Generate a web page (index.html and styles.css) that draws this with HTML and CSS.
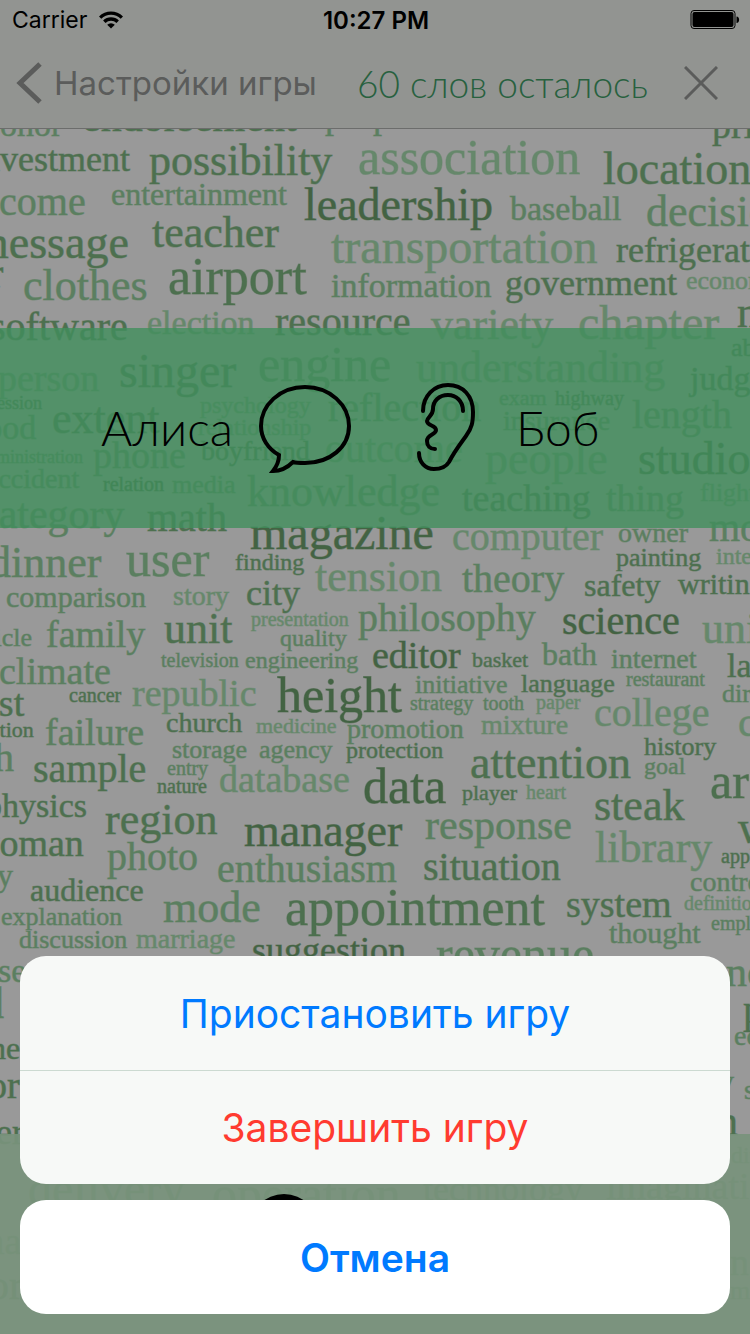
FILE: index.html
```html
<!DOCTYPE html>
<html lang="ru">
<head>
<meta charset="utf-8">
<meta name="viewport" content="width=device-width, initial-scale=1">
<title>60 слов осталось</title>
<link rel="stylesheet" href="styles.css">
</head>
<body>
<div class="screen">
<svg class="cloud" viewBox="0 -1 750 1334" preserveAspectRatio="xMidYMin slice" aria-hidden="true">
<text class="c s34" x="0" y="135">onor</text>
<text class="b s42" x="82" y="130">endorsement</text>
<text class="c s36" x="325" y="127">proposal</text>
<text class="b s38" x="712" y="137">private</text>
<text class="b s36" x="-28" y="170">investment</text>
<text class="b s44" x="149" y="174">possibility</text>
<text class="d s50" x="358" y="173">association</text>
<text class="b s46" x="603" y="183">location</text>
<text class="c s40" x="-32" y="214">income</text>
<text class="c s32" x="111" y="204">entertainment</text>
<text class="a s46" x="304" y="219">leadership</text>
<text class="c s34" x="510" y="219">baseball</text>
<text class="c s44" x="646" y="225">decision</text>
<text class="b s46" x="-27" y="257">message</text>
<text class="b s44" x="152" y="246">teacher</text>
<text class="d s48" x="331" y="262">transportation</text>
<text class="b s36" x="616" y="261">refrigerator</text>
<text class="b s40" x="-10" y="286">r</text>
<text class="c s44" x="23" y="299">clothes</text>
<text class="b s52" x="168" y="293">airport</text>
<text class="c s34" x="331" y="296">information</text>
<text class="b s36" x="505" y="294">government</text>
<text class="d s26" x="686" y="288">economy</text>
<text class="b s40" x="-10" y="339">software</text>
<text class="d s34" x="147" y="333">election</text>
<text class="b s40" x="275" y="334">resource</text>
<text class="d s44" x="431" y="338">variety</text>
<text class="d s48" x="578" y="338">chapter</text>
<text class="b s44" x="737" y="326">n</text>
<text class="d s38" x="-2" y="390">person</text>
<text class="b s48" x="119" y="386">singer</text>
<text class="c s50" x="258" y="380">engine</text>
<text class="d s44" x="416" y="381">understanding</text>
<text class="b s26" x="731" y="355">able</text>
<text class="b s34" x="690" y="389">judge</text>
<text class="b s18" x="-10" y="408">session</text>
<text class="b s44" x="52" y="432">extent</text>
<text class="d s24" x="200" y="412">psychology</text>
<text class="c s40" x="328" y="420">reflection</text>
<text class="c s22" x="499" y="404">exam</text>
<text class="b s20" x="555" y="404">highway</text>
<text class="c s40" x="632" y="427">length</text>
<text class="c s34" x="-26" y="438">food</text>
<text class="c s28" x="503" y="429">insurance</text>
<text class="d s24" x="198" y="434">relationship</text>
<text class="c s18" x="-21" y="462">administration</text>
<text class="c s38" x="93" y="467">phone</text>
<text class="b s28" x="201" y="459">boyfriend</text>
<text class="d s40" x="325" y="461">outcome</text>
<text class="d s46" x="485" y="473">people</text>
<text class="a s46" x="638" y="473">studio</text>
<text class="c s28" x="-14" y="487">accident</text>
<text class="a s20" x="103" y="490">relation</text>
<text class="c s26" x="172" y="492">media</text>
<text class="c s44" x="247" y="505">knowledge</text>
<text class="b s38" x="462" y="510">teaching</text>
<text class="c s38" x="606" y="510">thing</text>
<text class="d s26" x="700" y="500">flight</text>
<text class="c s42" x="-20" y="527">category</text>
<text class="b s40" x="147" y="530">math</text>
<text class="a s48" x="250" y="548">magazine</text>
<text class="d s40" x="452" y="549">computer</text>
<text class="c s28" x="618" y="541">owner</text>
<text class="c s40" x="709" y="540">more</text>
<text class="c s44" x="-11" y="576">dinner</text>
<text class="c s50" x="126" y="575">user</text>
<text class="b s24" x="235" y="569">finding</text>
<text class="b s26" x="616" y="565">painting</text>
<text class="d s24" x="716" y="563">interest</text>
<text class="d s44" x="315" y="590">tension</text>
<text class="c s40" x="462" y="591">theory</text>
<text class="b s32" x="584" y="595">safety</text>
<text class="b s30" x="678" y="593">writing</text>
<text class="c s30" x="6" y="606">comparison</text>
<text class="d s28" x="173" y="604">story</text>
<text class="b s36" x="246" y="604">city</text>
<text class="d s20" x="251" y="625">presentation</text>
<text class="c s40" x="358" y="630">philosophy</text>
<text class="a s40" x="562" y="633">science</text>
<text class="d s44" x="702" y="642">union</text>
<text class="c s26" x="-33" y="645">article</text>
<text class="c s38" x="46" y="646">family</text>
<text class="b s44" x="164" y="642">unit</text>
<text class="c s24" x="280" y="645">quality</text>
<text class="c s20" x="161" y="666">television</text>
<text class="c s24" x="245" y="667">engineering</text>
<text class="a s38" x="372" y="667">editor</text>
<text class="b s22" x="472" y="666">basket</text>
<text class="c s32" x="542" y="664">bath</text>
<text class="c s28" x="611" y="667">internet</text>
<text class="b s34" x="727" y="676">law</text>
<text class="c s38" x="-1" y="683">climate</text>
<text class="b s20" x="69" y="701">cancer</text>
<text class="d s38" x="132" y="705">republic</text>
<text class="a s50" x="277" y="711">height</text>
<text class="c s26" x="415" y="692">initiative</text>
<text class="b s26" x="521" y="691">language</text>
<text class="c s20" x="626" y="685">restaurant</text>
<text class="c s26" x="722" y="701">director</text>
<text class="b s38" x="-37" y="715">cost</text>
<text class="b s22" x="-20" y="736">action</text>
<text class="c s38" x="45" y="744">failure</text>
<text class="b s28" x="166" y="731">church</text>
<text class="d s22" x="256" y="732">medicine</text>
<text class="c s20" x="410" y="709">strategy</text>
<text class="c s20" x="483" y="709">tooth</text>
<text class="d s20" x="536" y="708">paper</text>
<text class="c s28" x="347" y="737">promotion</text>
<text class="d s28" x="481" y="733">mixture</text>
<text class="d s40" x="594" y="725">college</text>
<text class="d s42" x="738" y="735">c</text>
<text class="c s40" x="-6" y="770">h</text>
<text class="c s26" x="172" y="757">storage</text>
<text class="c s26" x="259" y="757">agency</text>
<text class="b s24" x="346" y="757">protection</text>
<text class="b s26" x="644" y="754">history</text>
<text class="b s46" x="470" y="777">attention</text>
<text class="c s24" x="644" y="773">goal</text>
<text class="b s40" x="33" y="781">sample</text>
<text class="c s20" x="167" y="774">entry</text>
<text class="b s20" x="157" y="792">nature</text>
<text class="d s38" x="219" y="791">database</text>
<text class="a s50" x="363" y="802">data</text>
<text class="b s22" x="462" y="799">player</text>
<text class="d s20" x="526" y="798">heart</text>
<text class="b s44" x="594" y="819">steak</text>
<text class="b s50" x="710" y="797">ar</text>
<text class="b s34" x="-15" y="816">physics</text>
<text class="b s44" x="105" y="833">region</text>
<text class="a s46" x="244" y="845">manager</text>
<text class="c s42" x="425" y="838">response</text>
<text class="d s44" x="595" y="861">library</text>
<text class="b s46" x="738" y="842">w</text>
<text class="b s38" x="-28" y="855">woman</text>
<text class="c s40" x="107" y="869">photo</text>
<text class="c s40" x="217" y="881">enthusiasm</text>
<text class="b s40" x="423" y="879">situation</text>
<text class="b s20" x="721" y="862">apple</text>
<text class="c s28" x="690" y="890">control</text>
<text class="c s32" x="-3" y="885">y</text>
<text class="b s32" x="30" y="900">audience</text>
<text class="c s26" x="1" y="924">explanation</text>
<text class="c s44" x="163" y="921">mode</text>
<text class="b s52" x="285" y="924">appointment</text>
<text class="b s38" x="566" y="916">system</text>
<text class="d s20" x="684" y="909">definition</text>
<text class="c s20" x="711" y="929">employ</text>
<text class="c s30" x="609" y="942">thought</text>
<text class="c s26" x="19" y="947">discussion</text>
<text class="d s28" x="136" y="947">marriage</text>
<text class="a s36" x="252" y="961">suggestion</text>
<text class="c s50" x="436" y="970">revenue</text>
<text class="c s34" x="-2" y="981">se</text>
<text class="c s44" x="-18" y="1017">d</text>
<text class="b s32" x="-10" y="1058">ne</text>
<text class="b s38" x="-12" y="1097">or</text>
<text class="b s36" x="-4" y="1143">er</text>
<text class="c s42" x="726" y="985">no</text>
<text class="b s42" x="743" y="1022">p</text>
<text class="c s28" x="734" y="1044">ec</text>
<text class="c s32" x="718" y="1091">y</text>
<text class="c s28" x="744" y="1098">s</text>
<text class="b s42" x="717" y="1134">n</text>
<text class="c s24" x="731" y="1162">dit</text>
<text class="c s48" x="28" y="1204">delivery</text>
<text class="c s50" x="212" y="1210">operation</text>
<text class="c s36" x="423" y="1200">technology</text>
<text class="c s38" x="606" y="1198">imagination</text>
<text class="c s38" x="-25" y="1253">ma</text>
<text class="b s42" x="-12" y="1298">or</text>
<text class="c s38" x="730" y="1274">n</text>
<text class="c s26" x="730" y="1298">mi</text>
</svg>

<header class="top">
  <div class="status">
    <div class="carrier">
      <span>Carrier</span>
      <svg class="wifi" viewBox="0 0 26 20" aria-hidden="true">
        <path d="M1 6.5A17 17 0 0 1 25 6.5L22.7 8.8A13.7 13.7 0 0 0 3.3 8.8Z"/>
        <path d="M5.1 10.6A11.2 11.2 0 0 1 20.9 10.6L18.5 13A7.8 7.8 0 0 0 7.5 13Z"/>
        <path d="M9.2 14.7A5.4 5.4 0 0 1 16.8 14.7L13 18.6Z"/>
      </svg>
    </div>
    <span class="time">10:27 PM</span>
    <svg class="battery" viewBox="0 0 50 20" aria-hidden="true">
      <rect x="1" y="0.5" width="44" height="18" rx="3" fill="none" stroke="#000"/>
      <rect x="2.5" y="2" width="41" height="15" rx="2"/>
      <path d="M46.500 6.5C50 6.5 50 13 46.500 13Z"/>
    </svg>
  </div>
  <nav class="nav">
    <a class="back" href="#">
      <svg class="chevron" viewBox="0 0 26 42" aria-hidden="true"><path d="M24 2L4 21L24 40"/></svg>
      <span>Настройки игры</span>
    </a>
    <h1 class="title">60 слов осталось</h1>
    <button class="close" type="button" aria-label="Закрыть">
      <svg class="cross" viewBox="0 0 34 34" aria-hidden="true"><path d="M1 1L33 33M33 1L1 33"/></svg>
    </button>
  </nav>
</header>

<main class="players">
  <div class="player speaker">
    <span>Алиса</span>
    <svg class="bubble" viewBox="0 0 92 88" aria-hidden="true"><path d="M20 70C9 64 2 53 2 41C2 20 21 2 46 2S90 20 90 41S71 78 46 78C41 78 37 78 34 77C28 83 22 86 14 86C18 81 20 76 20 70Z"/></svg>
  </div>
  <div class="player listener">
    <svg class="ear" viewBox="0 0 62 90" aria-hidden="true"><path d="M8 29C8 14 19 3 33 3C48 3 58 14 58 30C58 40 57 46 51 54C43 65 39 70 34 80C31 85 26 87 19 87C10 87 4 80 4 71M48 29C48 19 41 13 33 13C24 13 18 19 18 27C18 34 12 35 12 39C12 44 21 43 21 48C21 53 12 52 12 59C12 64 15 67 20 67"/></svg>
    <span>Боб</span>
  </div>
</main>

<footer class="start">
  <svg class="dial" viewBox="0 0 70 70" aria-hidden="true"><circle cx="35" cy="35" r="35"/></svg>
</footer>

<div class="sheet" role="dialog" aria-label="Меню игры">
  <div class="actions">
    <button class="action" type="button">Приостановить игру</button>
    <button class="action danger" type="button">Завершить игру</button>
  </div>
  <button class="action cancel" type="button">Отмена</button>
</div>
</div>
</body>
</html>
```
FILE: styles.css
```css
* { box-sizing: border-box; }

body {
  margin: 0;
  background: #999;
  font-family: Inter, "Noto Sans", sans-serif;
}

button {
  border: 0;
  padding: 0;
  background: none;
  font: inherit;
}

svg { display: block; flex: none; }

.screen {
  position: relative;
  display: flex;
  flex-direction: column;
  min-height: 100vh;
  overflow: hidden;
}

/* word cloud behind everything */
.cloud {
  position: absolute;
  inset: 0;
  width: 100%;
  height: 100%;
  font-family: "Liberation Serif", serif;
  stroke-width: 1px;
  stroke-opacity: .5;
}
.a { fill: #436343; stroke: #436343; }
.b { fill: #4d704f; stroke: #4d704f; }
.c { fill: #5b7f60; stroke: #5b7f60; }
.d { fill: #66886b; stroke: #66886b; }
.s18 { font-size: 18px; }
.s20 { font-size: 20px; }
.s22 { font-size: 22px; }
.s24 { font-size: 24px; }
.s26 { font-size: 26px; }
.s28 { font-size: 28px; }
.s30 { font-size: 30px; }
.s32 { font-size: 32px; }
.s34 { font-size: 34px; }
.s36 { font-size: 36px; }
.s38 { font-size: 38px; }
.s40 { font-size: 40px; }
.s42 { font-size: 42px; }
.s44 { font-size: 44px; }
.s46 { font-size: 46px; }
.s48 { font-size: 48px; }
.s50 { font-size: 50px; }
.s52 { font-size: 52px; }

.top, .players, .start { position: relative; }

.top {
  background: #929491;
  border-bottom: 1px solid #6c6d6c;
}

.status {
  display: grid;
  grid-template-columns: 1fr auto 1fr;
  align-items: center;
  height: 40px;
  padding: 0 10px 0 12px;
  font-size: 23px;
}
.carrier { display: flex; align-items: center; gap: 11px; }
.wifi { width: 26px; height: 20px; }
.time { font-size: 24px; font-weight: 600; }
.battery { width: 50px; height: 20px; justify-self: end; }

.nav {
  display: flex;
  align-items: center;
  justify-content: space-between;
  height: 88px;
  padding: 0 32px 2px 16px;
}
.back {
  display: flex;
  align-items: center;
  gap: 12px;
  color: #5b5c5b;
  font-size: 33px;
  text-decoration: none;
}
.chevron { width: 26px; height: 42px; fill: none; stroke: #5b5c5b; stroke-width: 5; }
.title {
  margin: 0;
  padding-left: 4px;
  color: #28613f;
  font-family: Lato, "Noto Sans", sans-serif;
  font-size: 37px;
  font-weight: 300;
}
.cross { width: 34px; height: 34px; fill: none; stroke: #5b5c5b; stroke-width: 3; }

.players {
  display: grid;
  grid-template-columns: 1fr 1fr;
  height: 200px;
  margin-top: 199px;
  padding-bottom: 2px;
  background: rgba(65, 142, 92, .8);
  font-family: Lato, "Noto Sans", sans-serif;
  font-size: 48px;
  font-weight: 300;
}
.player { display: flex; align-items: center; }
.speaker { justify-content: flex-end; gap: 26px; padding-right: 24px; }
.listener { gap: 39px; padding-left: 40px; }
.bubble { width: 92px; height: 88px; margin-top: 4px; fill: none; stroke: #000; stroke-width: 4; }
.ear { width: 62px; height: 90px; fill: none; stroke: #000; stroke-width: 4; stroke-linecap: round; stroke-linejoin: round; }

.start {
  height: 200px;
  margin-top: auto;
  padding: 60px 0 0 249px;
  background: rgba(120, 146, 124, .92);
}
.dial { width: 70px; height: 70px; }

.sheet {
  position: absolute;
  right: 20px;
  bottom: 20px;
  left: 20px;
  display: grid;
  gap: 16px;
}
.actions {
  border-radius: 26px;
  overflow: hidden;
  background: #f7f9f7;
}
.action {
  display: block;
  width: 100%;
  height: 114px;
  color: #007aff;
  font-size: 39px;
}
.danger { border-top: 1px solid #ccdad1; color: #ff3b30; }
.cancel { border-radius: 26px; background: #fff; font-weight: 600; }
```
